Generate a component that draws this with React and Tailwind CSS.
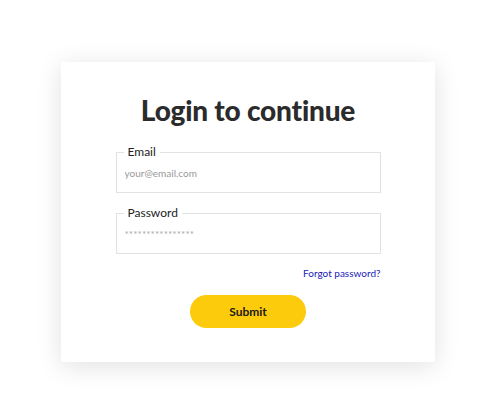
export default function App() {
  return (
    <div className="min-h-[417px] bg-white flex justify-center pt-[62px] pr-[4px]" style={{ fontFamily: "Lato, 'Liberation Sans', sans-serif" }}>
      <div className="w-[374px] h-[300px] bg-white shadow-[0_4px_24px_rgba(0,0,0,0.12)] flex flex-col items-center pt-[30px]">
        <h1 className="text-[28px] font-black text-[#2b2b2b] leading-[36px] tracking-[-0.2px]">Login to continue</h1>
        <form className="w-[265px] mt-[17px] flex flex-col" onSubmit={(e) => e.preventDefault()}>
          <fieldset className="border border-[#e2e2e2] px-[8px] pb-[12px] h-[48px]">
            <legend className="px-[4px] ml-[-1px] text-[12px] text-[#222] leading-[14px]">Email</legend>
            <input className="w-full outline-none text-[10px] text-[#333] placeholder-[#999] leading-[16px] pt-[6px]" placeholder="your@email.com" />
          </fieldset>
          <fieldset className="border border-[#e2e2e2] px-[8px] pb-[12px] h-[48px] mt-[13px]">
            <legend className="px-[4px] ml-[-1px] text-[12px] text-[#222] leading-[14px]">Password</legend>
            <input readOnly className="w-full outline-none text-[10px] text-[#aaa] tracking-[0.1px] leading-[16px] pt-[5px]" defaultValue="****************" />
          </fieldset>
          <div className="flex justify-end mt-[12px]">
            <a href="#" className="text-[10px] text-[#1a1ab8]">Forgot password?</a>
          </div>
          <div className="flex justify-center mt-[14px]">
            <button type="submit" className="w-[116px] h-[33px] rounded-full bg-[#fccb0b] text-[12px] font-bold text-[#1a1a1a]">Submit</button>
          </div>
        </form>
      </div>
    </div>
  );
}
